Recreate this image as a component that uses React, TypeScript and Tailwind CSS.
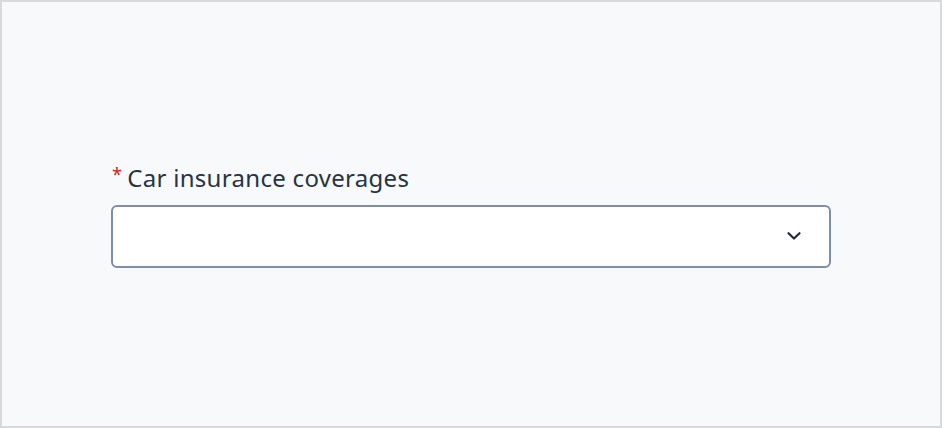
import React from 'react';

const ChevronDown = () => (
  <svg width="16" height="16" viewBox="0 0 16 16" fill="none">
    <path d="M2.5 5.2l5.5 5.3 5.5-5.3" stroke="#1f2a37" strokeWidth="2.2" strokeLinecap="round" strokeLinejoin="round" />
  </svg>
);

export default function App() {
  return (
    <div
      className="w-[942px] h-[428px] bg-[#f8f9fa] border-2 border-[#d9d9db] flex items-center justify-center"
      style={{ fontFamily: '"Source Sans Pro", "Noto Sans", sans-serif' }}
    >
      <div className="w-[720px] flex flex-col gap-[12px] mt-[2px]">
        {/* Label */}
        <label className="flex items-start gap-[5px] h-[30px] text-[24px] leading-[30px] text-[#273444] tracking-[0.3px]">
          <span className="text-[#c9211e] text-[18px] leading-[18px] mt-[2px] ml-[1px]">*</span>
          <span>Car insurance coverages</span>
        </label>

        {/* Select */}
        <button
          type="button"
          className="h-[63px] w-full bg-white border-2 border-[#7d8ea8] rounded-[6px] flex items-center justify-end pr-[27px]"
        >
          <ChevronDown />
        </button>
      </div>
    </div>
  );
}
